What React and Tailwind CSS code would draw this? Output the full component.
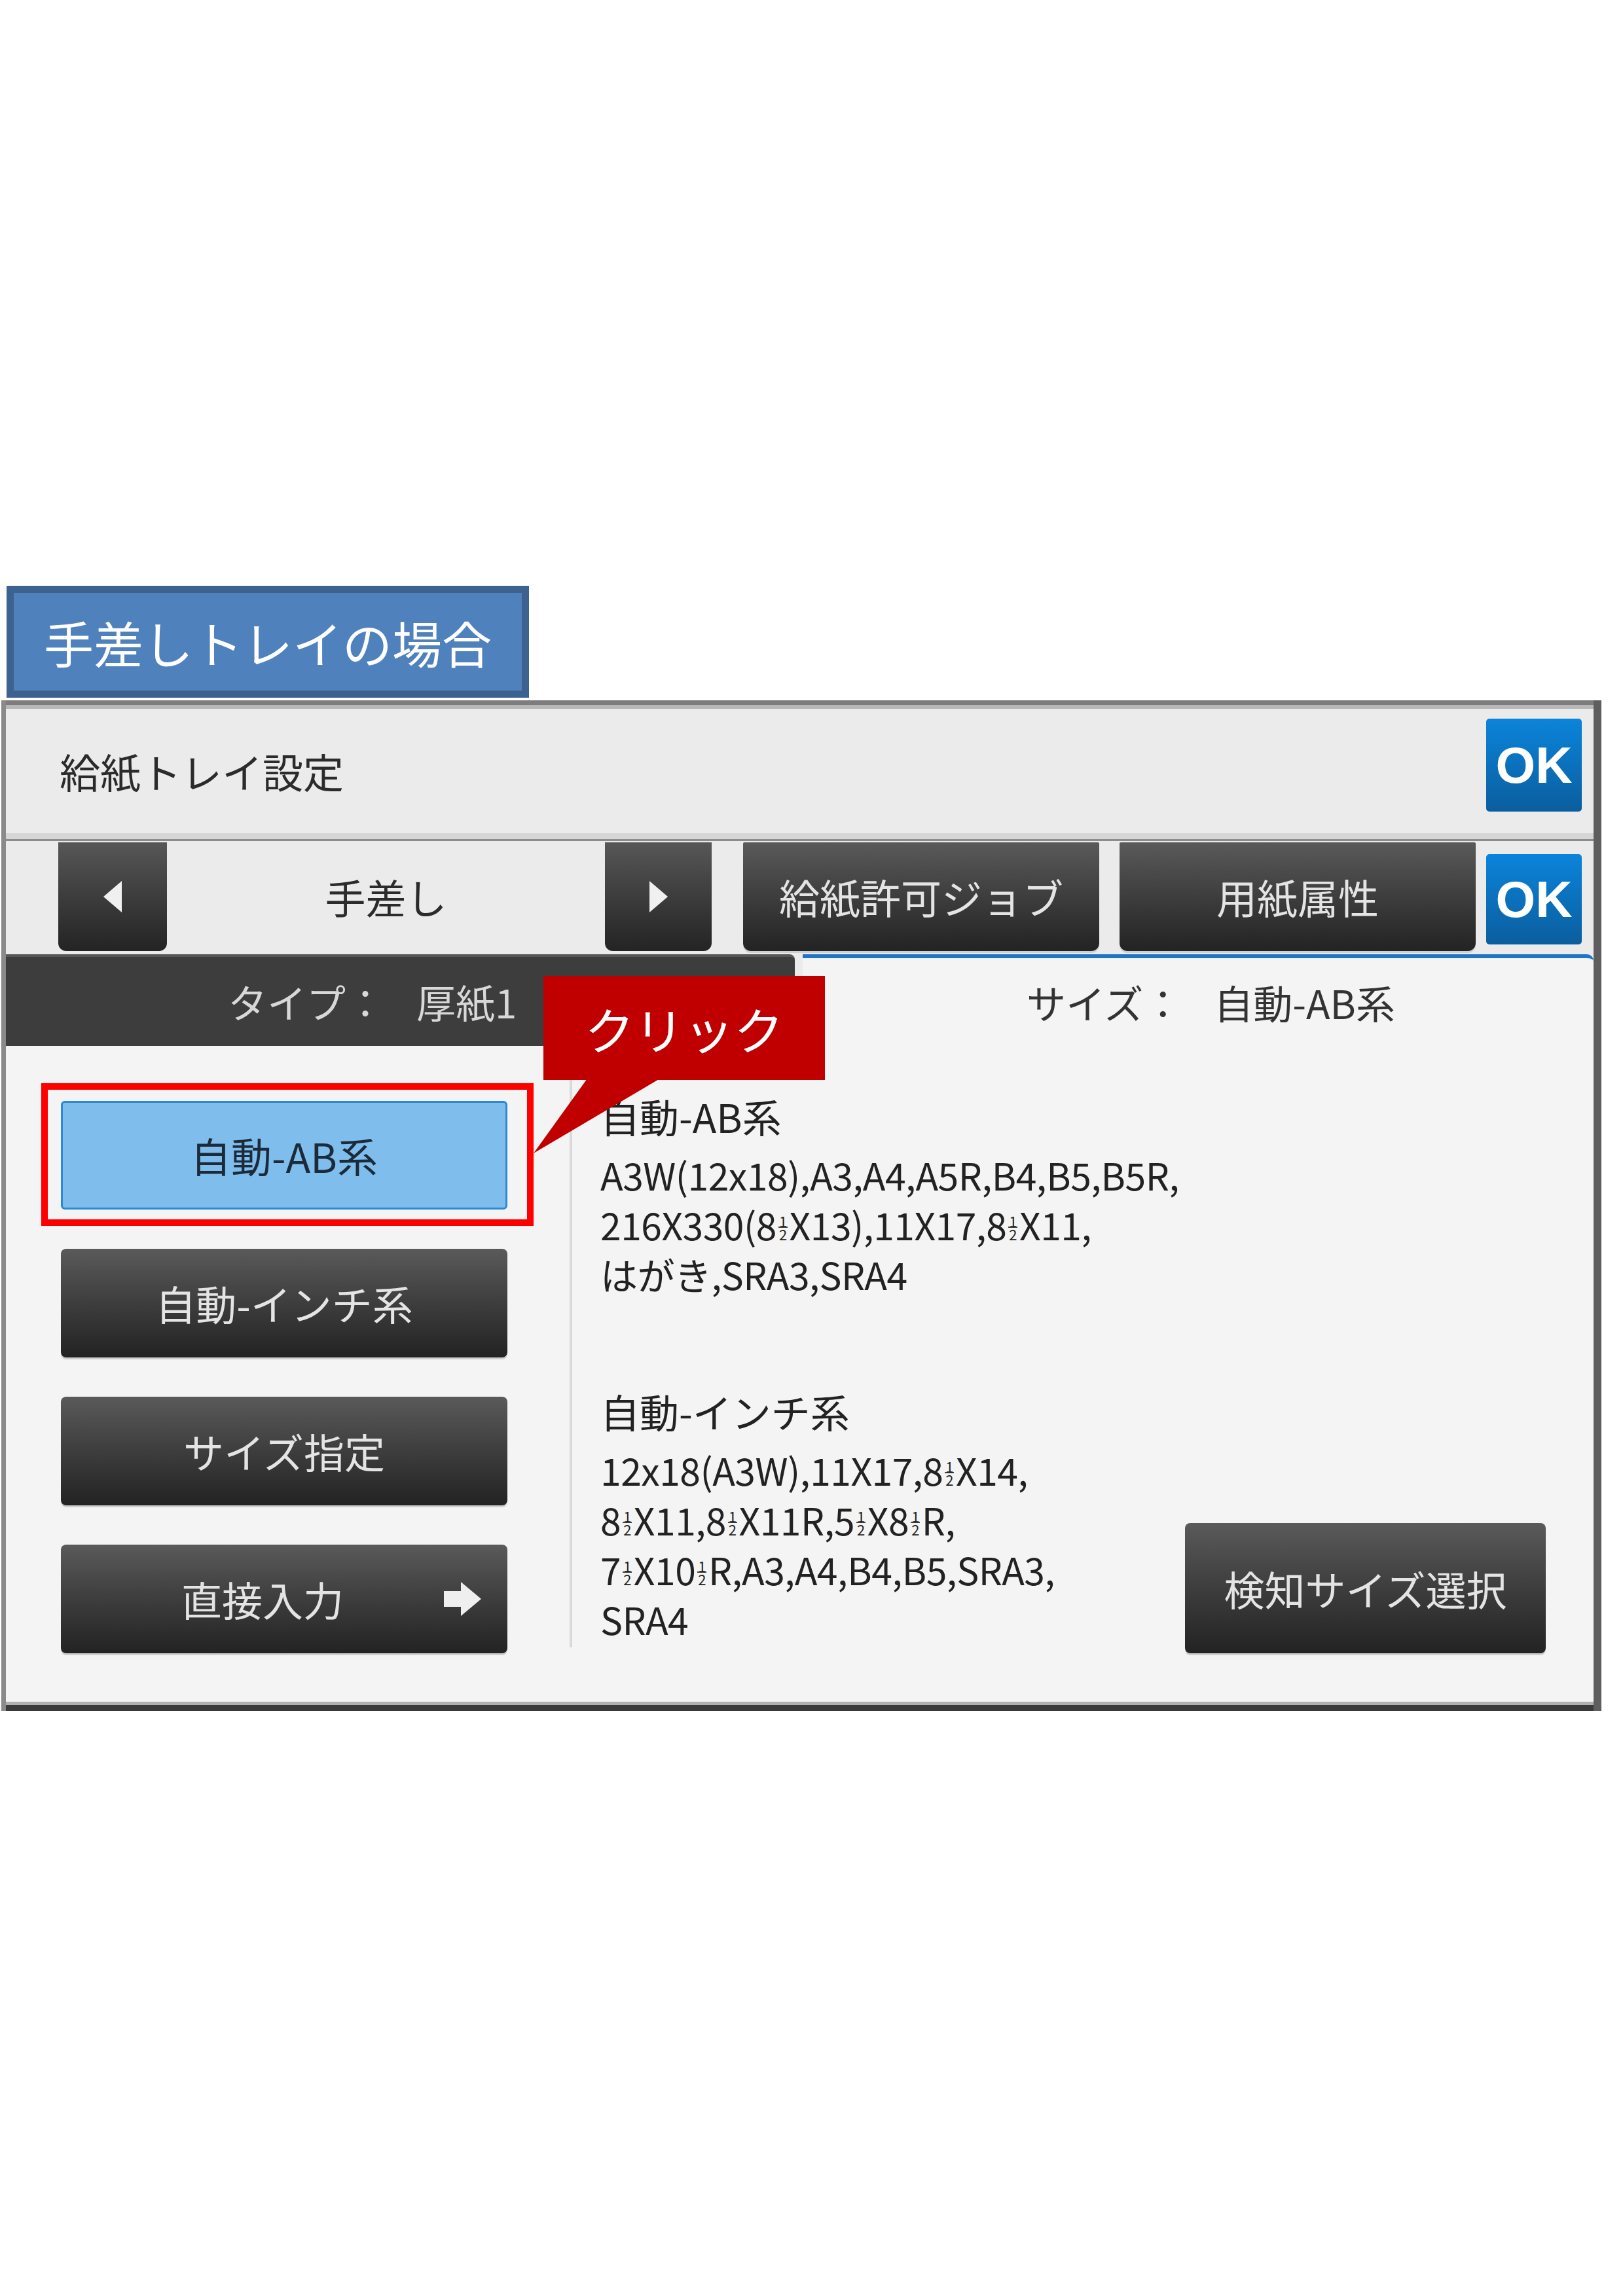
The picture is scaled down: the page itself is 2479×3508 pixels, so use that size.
const jp = "font-['Noto_Sans_CJK_JP','Noto_Sans',sans-serif]";

function DarkBtn({ className = '', children }) {
  return (
    <div className={`flex items-center justify-center rounded-[8px] bg-linear-to-b from-[#5a5a5a] to-[#232323] text-[62px] leading-none text-[#e4e4e4] shadow-[0_3px_0_#cfcfcf] ${className}`}>
      {children}
    </div>
  );
}

function OkBtn({ className = '' }) {
  return (
    <div className={`flex w-[146px] items-center justify-center rounded-[5px] bg-linear-to-b from-[#0b84db] to-[#0a5e9e] font-['Liberation_Sans',sans-serif] text-[78px] font-bold leading-none text-white ${className}`}>
      OK
    </div>
  );
}

function Half() {
  return (
    <span className="mx-[3px] inline-block text-center align-baseline text-[22px] leading-[18px]">
      <span className="block border-b-[2px] border-[#444] px-[1px]">1</span>
      <span className="block">2</span>
    </span>
  );
}

function Line({ children }) {
  return <div className="text-[57px] leading-[76px] tracking-[-0.5px] text-[#222]">{children}</div>;
}

export default function App() {
  return (
    <div className={`relative h-[3508px] w-[2479px] bg-white ${jp}`}>
      <div className="h-[895px]" />

      {/* section label */}
      <div className="ml-[10px] flex h-[171px] w-[798px] items-center border-[11px] border-[#3c6290] bg-[#4f81bd] pl-[46px] text-[76px] leading-none text-white">
        手差しトレイの場合
      </div>

      {/* tray settings panel */}
      <div className="ml-[2px] mt-[4px] w-[2444px] border-l-[7px] border-r-[12px] border-l-[#8a8a8a] border-r-[#5e5e5e]">
        <div className="h-[7px] bg-[#7d7d7d]" />
        <div className="h-[6px] bg-[#b8b8b8]" />

        <div className="flex h-[190px] items-center justify-between bg-[#ebebeb] pl-[82px] pr-[18px]">
          <span className="text-[62px] leading-none text-[#2b2b2b]">給紙トレイ設定</span>
          <OkBtn className="mb-[18px] h-[142px]" />
        </div>
        <div className="h-[9px] bg-[#d6d6d6]" />
        <div className="h-[3px] bg-[#8c8c8c]" />

        <div className="flex h-[173px] items-start bg-[#ebebeb] pl-[80px] pr-[18px] pt-[2px]">
          <div className="flex h-[166px] w-[166px] shrink-0 items-center justify-center rounded-b-[12px] bg-linear-to-b from-[#575757] to-[#242424]">
            <svg width="28" height="48" viewBox="0 0 28 48"><polygon points="28,0 28,48 0,24" fill="#f0f0f0" /></svg>
          </div>
          <div className="flex h-[166px] w-[669px] shrink-0 items-center justify-center text-[62px] leading-none text-[#2b2b2b]">手差し</div>
          <div className="flex h-[166px] w-[163px] shrink-0 items-center justify-center rounded-b-[12px] bg-linear-to-b from-[#575757] to-[#242424]">
            <svg width="28" height="48" viewBox="0 0 28 48"><polygon points="0,0 0,48 28,24" fill="#f0f0f0" /></svg>
          </div>
          <DarkBtn className="ml-[48px] h-[166px] w-[544px] shrink-0 rounded-t-[2px] rounded-b-[12px]">給紙許可ジョブ</DarkBtn>
          <DarkBtn className="ml-[31px] h-[166px] w-[544px] shrink-0 rounded-t-[2px] rounded-b-[12px]">用紙属性</DarkBtn>
          <OkBtn className="ml-auto mt-[18px] h-[138px]" />
        </div>

        {/* tabs */}
        <div className="flex h-[140px] bg-[#ebebeb]">
          <div className="flex w-[1205px] shrink-0 items-center rounded-tr-[8px] border-t-[4px] border-[#575757] bg-[#3d3d3d] pl-[339px] text-[60px] leading-none text-[#d8d8d8]">
            タイプ：<span className="ml-[48px]">厚紙1</span>
          </div>
          <div className="ml-[12px] flex flex-1 items-center rounded-tr-[10px] border-t-[6px] border-[#1f74c6] bg-[#f4f4f4] pl-[342px] text-[60px] leading-none text-[#333]">
            サイズ：<span className="ml-[48px]">自動-AB系</span>
          </div>
        </div>

        {/* content */}
        <div className="flex h-[1002px] bg-[#f4f4f4]">
          <div className="flex w-[861px] shrink-0 flex-col gap-[60px] pl-[84px] pt-[84px]">
            <div className="relative h-[166px] w-[682px]">
              <div className="flex h-full w-full items-center justify-center rounded-[6px] border-[3px] border-[#2b8ad6] bg-[#7fbdec] text-[62px] leading-none text-[#1c2b3a]">
                自動-AB系
              </div>
              <div className="absolute -bottom-[25px] -left-[30px] -right-[40px] -top-[27px] border-[10px] border-[#ff0000]" />
            </div>
            <DarkBtn className="h-[166px] w-[682px]">自動-インチ系</DarkBtn>
            <DarkBtn className="h-[166px] w-[682px]">サイズ指定</DarkBtn>
            <DarkBtn className="h-[166px] w-[682px] justify-start pl-[184px]">
              直接入力
              <svg className="ml-auto mr-[40px]" width="57" height="52" viewBox="0 0 57 52">
                <path d="M0 14 H26 V0 L57 26 L26 52 V38 H0 Z" fill="#efefef" />
              </svg>
            </DarkBtn>
          </div>

          <div className="mb-[83px] mt-[35px] w-[4px] shrink-0 bg-[#dadada]" />

          <div className="flex flex-1 items-end justify-between pb-[74px] pl-[43px] pr-[73px] pt-[69px]">
            <div className="self-start">
              <div className="mb-[13px] text-[60px] leading-[76px] text-[#222]">自動-AB系</div>
              <Line>A3W(12x18),A3,A4,A5R,B4,B5,B5R,</Line>
              <Line>216X330(8<Half />X13),11X17,8<Half />X11,</Line>
              <Line>はがき,SRA3,SRA4</Line>
              <div className="mb-[13px] mt-[134px] text-[60px] leading-[76px] text-[#222]">自動-インチ系</div>
              <Line>12x18(A3W),11X17,8<Half />X14,</Line>
              <Line>8<Half />X11,8<Half />X11R,5<Half />X8<Half />R,</Line>
              <Line>7<Half />X10<Half />R,A3,A4,B4,B5,SRA3,</Line>
              <Line>SRA4</Line>
            </div>
            <DarkBtn className="h-[199px] w-[551px] shrink-0">検知サイズ選択</DarkBtn>
          </div>
        </div>

        <div className="h-[5px] bg-[#b0b0b0]" />
        <div className="h-[9px] bg-[#3a3a3a]" />
      </div>

      {/* click callout */}
      <div className="absolute left-[830px] top-[1491px] flex h-[159px] w-[430px] items-center justify-center bg-[#c00000] text-[76px] leading-none text-white">
        クリック
      </div>
      <svg className="absolute left-[805px] top-[1648px]" width="210" height="120" viewBox="0 0 210 120">
        <polygon points="92,0 203,0 10,114" fill="#c00000" />
      </svg>
    </div>
  );
}
